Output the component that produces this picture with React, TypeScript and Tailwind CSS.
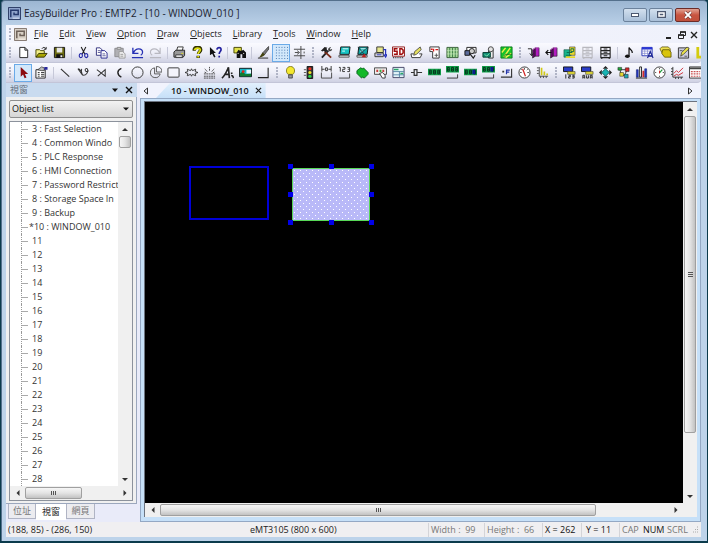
import type { ReactNode } from "react";
import clsx from "clsx";

type Tool = { name: string; art: ReactNode; active?: boolean };
type Item = Tool | "sep" | "grip";

const Monitor = ({ screen = "#19c4c4" }: { screen?: string }) => (
  <>
    <path d="M3 1h10l-1 8H2z" fill={screen} stroke="#111" />
    <path d="M5 3h6M4.500 5.500h3" stroke="#e8ffff" />
    <path d="M1 10h11v2H1z" fill="#ddd" stroke="#333" strokeWidth=".8" />
  </>
);

const Lcd = ({ y = 3 }: { y?: number }) => (
  <>
    <path d={`M0 ${y}h14v7H0z`} fill="#12a04a" />
    <path
      d={`M1.500 ${y + 1.5}h2v4h-2zM6 ${y + 1.5}h2v4h-2zM10.500 ${y + 1.5}h2v4h-2zM1.500 ${y + 3.5}h2M6 ${y + 3.5}h2M10.500 ${y + 3.5}h2`}
      stroke="#04301a"
      fill="none"
    />
  </>
);

const Shelf = () => <path d="M1 13h11.500V9" stroke="#333" fill="none" />;

const Book = () => (
  <>
    <path d="M6 4l3-2v9l-3 2z" fill="#5e0a66" stroke="#111" strokeWidth=".6" />
    <path d="M9 2h4v9H9z" fill="#b21cc0" stroke="#111" strokeWidth=".6" />
    <path d="M6 4l3-2h4" stroke="#e070e8" strokeWidth=".8" fill="none" />
  </>
);

const Cabinet = ({ color }: { color: string }) => (
  <path
    d="M2 1.500h10v11H2zM2 5h10M2 8.500h10M5 3.300h4M5 6.800h4M5 10.500h4M3 13v1M11 13v1"
    stroke={color}
    fill="none"
    strokeWidth="1.200"
  />
);

const fileTools: Item[] = [
  "grip",
  { name: "New", art: <path d="M3 1.500h5.500L11.500 4.500v8H3zM8.500 1.500v3h3" fill="#fff" stroke="#222" /> },
  {
    name: "Open",
    art: (
      <>
        <path d="M1 12V4h4l1 1h4v3" fill="#f4f08a" stroke="#444400" />
        <path d="M1 12l3-4h9l-3 4z" fill="#a8a400" stroke="#333300" />
        <path d="M7.500 3c1-2 3-2 4 0M12 1v2.500H9.500" stroke="#222" fill="none" />
      </>
    ),
  },
  {
    name: "Save",
    art: (
      <>
        <path d="M1.500 1.500h11v11h-11z" fill="#6b6b10" stroke="#111" />
        <path d="M4 2h6v5H4z" fill="#e6e6e6" />
        <path d="M3.500 9h7v4h-7z" fill="#111" />
        <path d="M8 10h2v2H8z" fill="#eee" />
      </>
    ),
  },
  "sep",
  {
    name: "Cut",
    art: (
      <>
        <path d="M4.500 1L8.500 9M9.500 1L5.500 9" stroke="#222" fill="none" strokeWidth="1.200" />
        <path d="M5.500 8.500C2 7 1.500 12 4 12.500 6 12.500 6 10 5.500 8.500zM8.500 8.500c3.500-1.500 4 3 2 4-2.500 0-2.500-2-2-4z" stroke="#2428a8" fill="none" strokeWidth="1.200" />
      </>
    ),
  },
  {
    name: "Copy",
    art: (
      <>
        <path d="M1.500 2h4L8 4.500V10H1.500z" fill="#fff" stroke="#30307c" />
        <path d="M6.500 5h4L13 7.500V13H6.500z" fill="#fff" stroke="#24248c" />
        <path d="M3 5h3M3 7h3M8 8.500h3M8 10.500h3.500" stroke="#30307c" strokeWidth=".8" />
      </>
    ),
  },
  {
    name: "Paste",
    art: (
      <>
        <path d="M2 2.500h9v9H2z" fill="#b0b0b4" stroke="#8c8c90" />
        <path d="M4.500 1.500h4v2h-4z" fill="#ddd" stroke="#888" />
        <path d="M6.500 6h4L13 8.500V13H6.500z" fill="#eee" stroke="#999" />
        <path d="M8 9h3M8 11h3" stroke="#999" />
      </>
    ),
  },
  {
    name: "Undo",
    art: <path d="M2 2v6h6M2.500 7.500C5 1.500 12 2 12.500 6.500c0 2-1 3-2 3.500M1 12.500h12" stroke="#2630b4" fill="none" strokeWidth="1.400" />,
  },
  {
    name: "Redo",
    art: <path d="M12 2v6H6M11.500 7.500C9 1.500 2 2 1.500 6.500c0 2 1 3 2 3.500M1 12.500h12" stroke="#b8b8c0" fill="none" strokeWidth="1.200" />,
  },
  "sep",
  {
    name: "Print",
    art: (
      <>
        <path d="M4 5l1-4h6l-1 4z" fill="#fff" stroke="#333" />
        <path d="M1 6.500l2-2h9.500V10L11 12H1z" fill="#999" stroke="#222" />
        <path d="M3 9.500h7v3H3z" fill="#ddd" stroke="#222" strokeWidth=".8" />
        <path d="M9 8h2" stroke="#e0d820" />
      </>
    ),
  },
  {
    name: "About",
    art: (
      <>
        <path d="M3.500 5V3.500C4.500.5 10.500.5 10.500 4c0 2-2.500 2.500-2.500 4.500M7.700 10.500v2.500" stroke="#333300" strokeWidth="3.600" fill="none" />
        <path d="M3.800 4.500C4.300 1.500 10 1.500 10 4c0 2-2.300 2.500-2.300 4.500M7.700 10.700v1.800" stroke="#dede10" strokeWidth="1.900" fill="none" />
      </>
    ),
  },
  {
    name: "Help pointer",
    art: (
      <>
        <path d="M1 1l6.500 6.500H5l2 4-1.500.8-2-4L1 10z" fill="#111" />
        <path d="M8.500 4C9 1 13 1 13 4c0 2-2 2-2 4.500M11 10.500v1.800" stroke="#2422a0" strokeWidth="1.800" fill="none" />
      </>
    ),
  },
  "sep",
  {
    name: "Find",
    art: (
      <>
        <path d="M1 1.500h8v6H1z" fill="#e0e04a" stroke="#444400" />
        <path d="M4 7l2-3 1.500 1h2L11 4l3 3v6h-4V9H8v4H4z" fill="#111" />
        <path d="M5 8h1M11 8h1" stroke="#fff" />
      </>
    ),
  },
  "sep",
  {
    name: "Style",
    art: (
      <>
        <path d="M12.500.5L6 7.500l2 2 4.500-6z" fill="#777" stroke="#222" strokeWidth=".7" />
        <path d="M6 7l2.500 2.500C6.500 12 4.500 12 2 12.500 4 11 4 9 6 7z" fill="#444410" />
        <path d="M1 13h11" stroke="#222" />
      </>
    ),
  },
  {
    name: "Grid",
    active: true,
    art: (
      <path
        d="M1 1.500h13M1 4.500h13M1 7.500h13M1 10.500h13M1 13.500h13"
        stroke="#3c6ca8"
        strokeDasharray="1 2"
      />
    ),
  },
  { name: "Snap", art: <path d="M1 3.500h12M1 10.500h12M8.500 0v14M2 7h4M4.500 5L7 7 4.500 9M12 6v2" stroke="#444" fill="none" /> },
  "grip",
  {
    name: "System parameters",
    art: (
      <>
        <path d="M2 12.500L9 5" stroke="#222" strokeWidth="2" />
        <path d="M5 6l7 6.500" stroke="#7c2c18" strokeWidth="2" />
        <path d="M1 5l4-4 3 1-1 1 1 2-2 2-2-2-1 1z" fill="#222" />
        <path d="M9 5c-1-2 1-4 3-3.500L10.500 3l1 1L13 3c.5 2-2 3.500-4 2z" fill="#444" />
      </>
    ),
  },
  { name: "Compile", art: <Monitor /> },
  {
    name: "Simulate",
    art: (
      <>
        <Monitor screen="#12a8a8" />
        <path d="M2 1l7 8M13 1L4 9" stroke="#1c2c34" strokeWidth=".8" />
        <path d="M9 8l2 4H6z" fill="#c02020" />
      </>
    ),
  },
  {
    name: "Download",
    art: (
      <>
        <path d="M3 1h7v6H3z" fill="#e6e68c" stroke="#333" />
        <path d="M1 7.500h9v4H1z" fill="#ddd" stroke="#333" />
        <path d="M10 4h2.500v6M10.500 9l2 3 1.500-3" stroke="#2632bc" fill="none" strokeWidth="1.300" />
        <path d="M3 9.500h5" stroke="#2632bc" />
      </>
    ),
  },
  {
    name: "Build SD data",
    art: (
      <>
        <path d="M.5 1h13v10H.5z" fill="#fff" stroke="#8c1414" />
        <path d="M6 3H2.500v2.700h3V9H2M8.500 3v6h2l1.500-1.500v-3L10.500 3z" stroke="#a00c0c" fill="none" strokeWidth="1.600" />
        <path d="M1 12.500h12" stroke="#333" strokeWidth="1.500" strokeDasharray="1 1" />
      </>
    ),
  },
  {
    name: "Edit label",
    art: (
      <>
        <path d="M1 8.500h3M10 8.500h3l-2 4H2l-1-4" fill="#fff" stroke="#333" />
        <path d="M4 10l1-4 6-5 1 3-5 5z" fill="#e6e060" stroke="#333" strokeWidth=".8" />
      </>
    ),
  },
  {
    name: "Address tag",
    art: (
      <>
        <path d="M2 1h10v12H5V6H2z" fill="#fff" stroke="#333" />
        <path d="M3 3.500h2M6 3v3M8 4h3" stroke="#d01c1c" strokeWidth="1.400" />
        <path d="M9 8v4M7 10h4" stroke="#555" />
      </>
    ),
  },
  {
    name: "String table",
    art: (
      <>
        <path d="M1 1.500h12v11H1z" fill="#a6d898" stroke="#335c33" />
        <path d="M4 2v10M7 2v10M10 2v10" stroke="#3a7c46" />
        <path d="M1 5h12M1 8.500h12" stroke="#d6efcf" strokeWidth=".6" />
      </>
    ),
  },
  {
    name: "Shape library",
    art: (
      <>
        <path d="M3 1.500h10v6H3z" fill="#fff" stroke="#222" />
        <path d="M1 5h5v5H1z" fill="#5c6c9c" stroke="#111" />
        <circle cx="8.500" cy="5.500" r="2.800" fill="#ccc" stroke="#222" />
        <path d="M6 8l4 5 2-3" stroke="#222" strokeWidth="1.300" fill="none" />
      </>
    ),
  },
  {
    name: "Picture library",
    art: (
      <>
        <path d="M7 3h5v10H7z" fill="#eee" stroke="#333" />
        <circle cx="9.500" cy="3.500" r="2.700" fill="#e4e4e4" stroke="#444" />
        <path d="M1 7h8v5H1z" fill="#128c74" stroke="#053d30" />
        <path d="M3 9l2 2 3-3" stroke="#7cecac" fill="none" />
      </>
    ),
  },
  {
    name: "Sound library",
    art: (
      <>
        <path d="M1 1h12v12H1z" fill="#18c42c" stroke="#0b7c1c" />
        <path d="M2 7l4-5M4 12l7-10M6 12.500L12 8" stroke="#f2f04a" strokeWidth="1.500" fill="none" />
        <path d="M4 12l2-3h7" stroke="#115c1c" fill="none" strokeWidth=".8" />
      </>
    ),
  },
  "grip",
  { name: "Import", art: (<><Book /><path d="M1 3h4v7M3 8l2 2.500L7 8" stroke="#222" fill="none" /></>) },
  { name: "Export", art: (<><Book /><path d="M7 7H1M3.500 4.500L1 7l2.500 2.500" stroke="#111" fill="none" strokeWidth="1.300" /></>) },
  {
    name: "Transfer",
    art: (
      <>
        <path d="M7 1h6v9H7z" fill="#e8d82c" stroke="#333" strokeWidth=".6" />
        <path d="M1 4h6v8H1z" fill="#18b48c" stroke="#0c4c3c" strokeWidth=".6" />
        <path d="M8.500 3h3v3h-3zM3 10h6M4 7h6" stroke="#086c50" fill="none" />
        <path d="M3 12h10" stroke="#e8d82c" strokeWidth="1.800" />
      </>
    ),
  },
  { name: "Archive", art: <Cabinet color="#b8b8be" /> },
  { name: "Data record", art: <Cabinet color="#222" /> },
  "sep",
  {
    name: "Sound",
    art: (
      <>
        <path d="M6.500 11V1.500C7 4 10.500 4 10 7.500" stroke="#111" fill="none" strokeWidth="1.300" />
        <ellipse cx="4.700" cy="11" rx="2.500" ry="1.900" fill="#111" />
      </>
    ),
  },
  {
    name: "Table",
    art: (
      <>
        <path d="M1 1.500h11v9H1z" fill="#fff" stroke="#2836b4" />
        <path d="M1 2.500h11" stroke="#2836d4" strokeWidth="2.500" />
        <path d="M1 5.500h11M1 8h11M4 3v7M7 3v7" stroke="#7c84cc" strokeWidth=".7" />
        <path d="M7 13l3-7 3 7M8 11h4" stroke="#1c2694" strokeWidth="1.300" fill="none" />
      </>
    ),
  },
  {
    name: "Tag",
    art: (
      <>
        <path d="M1 3l2-2h7l2 2v4H3z" fill="#eee050" stroke="#554c00" strokeWidth=".8" />
        <path d="M3 8l1-4h7l2 3v5H6z" fill="#d8c40c" stroke="#554c00" strokeWidth=".8" />
      </>
    ),
  },
  {
    name: "Edit",
    art: (
      <>
        <path d="M1.500 2h11v11h-11z" fill="#ccd" stroke="#333" />
        <path d="M4 11l1-4 6-6 2 2-6 6z" fill="#ece44c" stroke="#333" strokeWidth=".8" />
        <path d="M3 5h3M8 11h3" stroke="#555" />
      </>
    ),
  },
  { name: "Scale", art: <path d="M3 1v11h10" stroke="#d4cc10" fill="none" strokeWidth="3" /> },
];

const objectTools: Item[] = [
  "grip",
  {
    name: "Select",
    active: true,
    art: <path d="M4 1v10.500l2.500-2.300 1.700 4 2-.9-1.700-3.800H12z" fill="#8c0c10" />,
  },
  {
    name: "Properties",
    art: (
      <>
        <path d="M1 4h10v9H1z" fill="#fff" stroke="#222" />
        <path d="M3 7h2M6.500 7H10M3 9h2M6.500 9H10M3 11h2M6.500 11H10" stroke="#333" />
        <path d="M3 4l4-3 3 1v3L7 5z" fill="#bbb" stroke="#222" strokeWidth=".7" />
        <path d="M10 1h3.500v3H10z" fill="#28289c" />
      </>
    ),
  },
  "sep",
  { name: "Line", art: <path d="M2 3l9 8.500" stroke="#333" strokeWidth="1.200" /> },
  { name: "Freeform", art: <path d="M1 3c3 0 2 2 4 3M5 3c-1 4 1 7 2 7 3 0 5-3 4.500-6-.5-2.500-3.500-1-2.500 1 .5 1.500 2.500 1 3.500 0M1 3l5 7" stroke="#333" fill="none" strokeWidth="1.100" /> },
  { name: "Polyline", art: <path d="M2 4l9 7V4L3 11" stroke="#333" fill="none" strokeWidth="1.100" /> },
  { name: "Arc", art: <path d="M9 2.500C4 4.500 4 9.500 9 12" stroke="#222" fill="none" strokeWidth="1.500" /> },
  { name: "Ellipse", art: <circle cx="7" cy="7" r="6" fill="none" stroke="#333" /> },
  {
    name: "Pie",
    art: <path d="M6 2a5.300 5.300 0 1 0 6 6.500H6zM8 .500v6h6C14 3 12 .500 8 .500z" stroke="#555" fill="none" />,
  },
  { name: "Rectangle", art: <rect x="1" y="2" width="12" height="10" rx="1" fill="#f4f4fb" stroke="#333" /> },
  { name: "Polygon", art: <path d="M0 7l3-1-.5-2.500L6 5l1-2 1 2 3.500-1.500L11 6l3 1-3 1 .5 2.500L8 9l-1 2-1-2-3.500 1.500L3 8z" stroke="#333" fill="none" /> },
  {
    name: "Scale mark",
    art: <path d="M1 8.500h12M1 11h12M1 13h12M4.500 6L2 3M7 5V1M9.500 6L12 3M10.500 7.500l2-1M3.500 7.500l-2-1" stroke="#444" fill="none" strokeDasharray="2 .6" />,
  },
  {
    name: "Text",
    art: <path d="M1 13C4 11 6 6 8 1.500L9 13M3.500 9H9M11.500 7v1.500M11 10.500c2-.5 2 1.500 2.500 2.500" stroke="#222" fill="none" strokeWidth="1.800" />,
  },
  {
    name: "Picture",
    art: (
      <>
        <path d="M.5 2.500h13v9H.5z" fill="#18b8c8" stroke="#111" />
        <path d="M1 8l3-2 3 3 6-1v3H1z" fill="#107c30" />
        <circle cx="4.500" cy="6" r="1.500" fill="#e02818" />
        <path d="M8 4h5v4H8z" fill="#e8f8ff" />
      </>
    ),
  },
  { name: "Vector", art: <path d="M1 12.500h11V2" stroke="#222" fill="none" strokeWidth="1.200" /> },
  "grip",
  {
    name: "Bit lamp",
    art: (
      <>
        <path d="M4.500 9C1.500 7 2 .5 7 .5s5.500 6.500 2.500 8.500z" fill="#f4e830" stroke="#6c6400" strokeWidth=".8" />
        <path d="M5 9.500h4v3.500H5z" fill="#999" stroke="#333" strokeWidth=".8" />
      </>
    ),
  },
  {
    name: "Word lamp",
    art: (
      <>
        <path d="M5.500.5h6v13h-6z" fill="#333" stroke="#111" />
        <circle cx="8.500" cy="3" r="1.700" fill="#f03020" />
        <circle cx="8.500" cy="7" r="1.700" fill="#f0e028" />
        <circle cx="8.500" cy="11" r="1.700" fill="#28d848" />
        <path d="M2 4h2.500M2 7h2.500M2 10h2.500" stroke="#555" />
      </>
    ),
  },
  { name: "Set bit", art: (<><path d="M2 0v6M2 3.500h3M12 0v6M9 3.500h3M6 2h2v3H6z" stroke="#333" fill="none" /><path d="M1.500 7v6M1.500 13h11V7" stroke="#444" fill="none" /></>) },
  { name: "Set word", art: (<><path d="M1 1.500h1.500V6M5 1.500h2.500v2H5V6h2.500M10 1.500h2.500V6H10M10.500 3.500h2" stroke="#333" fill="none" /><path d="M1 13h11.500V8" stroke="#444" fill="none" /></>) },
  { name: "Function key", art: <path d="M1 5l4-3 2 1 1-1 5 5v2l-4 4-2-1-1 1-5-5z" fill="#12b828" stroke="#08601c" /> },
  {
    name: "Toggle switch",
    art: (
      <>
        <path d="M.5 2h13v7H.5z" fill="#eee" stroke="#444" />
        <path d="M2.500 4h2v2.500h-2zM9 4h2v2.500H9z" fill="#c83838" />
        <path d="M6 4h2v2.500H6z" fill="#38a838" />
        <path d="M6 8l3-1 3 3v3H9z" fill="#fff" stroke="#333" />
      </>
    ),
  },
  {
    name: "Multi-state switch",
    art: (
      <>
        <path d="M1 1.500h12v11H1z" fill="#e4f4f8" stroke="#446" />
        <path d="M1 6h12M1 9.500h12M8 6v6" stroke="#5888a8" fill="none" />
        <path d="M2 3.700h5M9 8h3" stroke="#28a868" strokeWidth="1.500" />
      </>
    ),
  },
  { name: "Slider", art: <path d="M1 7h3.500M8 7h5M4.500 4h3v6h-3z" stroke="#333" fill="none" strokeWidth="1.300" /> },
  { name: "Numeric input", art: <Lcd /> },
  { name: "Numeric display", art: (<><Lcd y={0} /><Shelf /></>) },
  { name: "ASCII input", art: (<><Lcd /><path d="M9 4h3v5H9z" fill="#0c1c90" /></>) },
  { name: "ASCII display", art: (<><Lcd y={0} /><path d="M9 1h3v5H9z" fill="#0c1c90" /><Shelf /></>) },
  {
    name: "Indirect window",
    art: (
      <>
        <path d="M1 12h11.500V3" stroke="#333" fill="none" strokeWidth="1.200" />
        <path d="M7 9V4.500h3.500M7 6.500h3" stroke="#2434a8" fill="none" strokeWidth="1.300" />
        <path d="M2.500 5h2v2h-2z" fill="#333" />
      </>
    ),
  },
  {
    name: "Meter",
    art: (
      <>
        <circle cx="7" cy="7" r="6" fill="#fff" stroke="#333" />
        <path d="M7 2v2M2 7h2M10 7h2M3.500 3.500l1 1M10.500 3.500l-1 1" stroke="#555" />
        <path d="M5 3l3 8" stroke="#d02020" strokeWidth="1.300" />
      </>
    ),
  },
  {
    name: "Bar graph",
    art: (
      <>
        <path d="M3.500 1v10H13M1 2h2M1 5h2M1 8h2M5 11v2M8 11v2M11 11v2" stroke="#444" fill="none" />
        <path d="M6 2v8M9 6v4M12 8v2" stroke="#d0c814" strokeWidth="1.800" />
      </>
    ),
  },
  "grip",
  {
    name: "PLC control",
    art: (
      <>
        <path d="M.5 1h10v5H.5z" fill="#2a3cc8" stroke="#111" />
        <path d="M5 6h8v3H5z" fill="#e0d838" stroke="#333" strokeWidth=".6" />
        <path d="M3 9v4.500M6 10h2v1.500H6V13h2M10 10h2v3h-2M10 11.500h2" stroke="#222" fill="none" />
      </>
    ),
  },
  {
    name: "ASCII transfer",
    art: (
      <>
        <path d="M.5 1h10v5H.5z" fill="#2a3cc8" stroke="#111" />
        <path d="M5 6h8v3H5z" fill="#e0d838" stroke="#333" strokeWidth=".6" />
        <path d="M2 13.500V10h2v3.500M6 10v3h2v-3M10 13.500V10h2v3.500M2 12h2M10 12h2" stroke="#222" fill="none" />
      </>
    ),
  },
  {
    name: "Moving shape",
    art: (
      <>
        <path d="M7 0l3 3H4zM7 14l-3-3h6zM0 7l3-3v6zM14 7l-3 3V4z" fill="#222" />
        <path d="M7 3l4 4-4 4-4-4z" fill="#18b4b4" stroke="#085c5c" />
      </>
    ),
  },
  {
    name: "Animation",
    art: (
      <>
        <path d="M3 4h8l-3 6H5z" fill="none" stroke="#333" />
        <path d="M1 1.500h4v3H1z" fill="#22a43c" stroke="#111" strokeWidth=".5" />
        <path d="M9 2h4v4H9z" fill="#d42828" stroke="#111" strokeWidth=".5" />
        <path d="M3 7h4v4H3z" fill="#e8d830" stroke="#111" strokeWidth=".5" />
        <path d="M8 9h4v4H8z" fill="#22a4b4" stroke="#111" strokeWidth=".5" />
      </>
    ),
  },
  {
    name: "History chart",
    art: (
      <>
        <path d="M1.500 4h2v8h-2z" fill="#2638c4" stroke="#14206c" strokeWidth=".6" />
        <path d="M5 1h2v11H5z" fill="#fff" stroke="#222" />
        <path d="M8 5h2v7H8z" fill="#d02c2c" />
        <path d="M10.500 3h2v9h-2z" fill="#2638c4" stroke="#14206c" strokeWidth=".6" />
        <path d="M1 13h12" stroke="#222" />
      </>
    ),
  },
  {
    name: "Clock",
    art: (
      <>
        <circle cx="7" cy="7" r="6" fill="#fff" stroke="#333" />
        <path d="M7 2v1.500M7 10.500V12M2 7h1.500M10.500 7H12" stroke="#555" />
        <path d="M7 7.500L10 4" stroke="#209838" strokeWidth="1.300" />
        <path d="M7 8V5" stroke="#c82020" />
      </>
    ),
  },
  {
    name: "Trend display",
    art: (
      <>
        <path d="M2 1v11h11M0 3h2M0 6h2M0 9h2M5 12v2M8 12v2M11 12v2" stroke="#333" fill="none" />
        <path d="M3 8l3-3 2 2 5-5M3 11l3-2 2 1 5-3" stroke="#cc2c34" fill="none" />
      </>
    ),
  },
  {
    name: "Data table",
    art: (
      <>
        <path d="M.5 1h13v12H.5z" fill="#fff" stroke="#333" />
        <path d="M1 2.500h12" stroke="#444" strokeWidth="2" />
        <path d="M2 6h10M2 8.500h10M2 11h10" stroke="#c85050" strokeDasharray="2 1" strokeWidth="1.200" />
      </>
    ),
  },
];

const menus = ["File", "Edit", "View", "Option", "Draw", "Objects", "Library", "Tools", "Window", "Help"];

const windows = [
  "3 : Fast Selection",
  "4 : Common Windo",
  "5 : PLC Response",
  "6 : HMI Connection",
  "7 : Password Restrict",
  "8 : Storage Space In",
  "9 : Backup",
  "*10 : WINDOW_010",
  ...Array.from({ length: 18 }, (_, i) => String(i + 11)),
];

const handles = [
  "left-0 top-0",
  "left-[41px] top-0",
  "right-0 top-0",
  "left-0 top-[28px]",
  "right-0 top-[28px]",
  "left-0 bottom-0",
  "left-[41px] bottom-0",
  "right-0 bottom-0",
];

function Grip() {
  return (
    <span className="flex h-3 w-[9px] shrink-0 flex-col items-center justify-between first:w-2">
      {[0, 1, 2, 3].map((n) => (
        <span key={n} className="size-[2px] bg-[#b0b4c6]" />
      ))}
    </span>
  );
}

function Toolbar({ label, items }: { label: string; items: Item[] }) {
  return (
    <div
      role="toolbar"
      aria-label={label}
      className="flex h-5 items-center overflow-hidden rounded-r-sm border-b border-[#c3c5d8] bg-linear-to-b from-[#fafaff] via-[#eeeff8] to-[#cfd1e3]"
    >
      {items.map((item, i) => {
        if (item === "grip") return <Grip key={i} />;
        if (item === "sep") {
          return (
            <span key={i} className="flex w-[6px] shrink-0 justify-center">
              <span className="h-3 w-px bg-[#c6c8d8]" />
            </span>
          );
        }
        return (
          <button
            key={i}
            aria-label={item.name}
            className={clsx(
              "flex h-[18px] w-[18px] shrink-0 items-center justify-center",
              item.active && "border border-[#6aaae8] bg-[#d3e8fb]",
            )}
          >
            <svg viewBox="0 0 14 14" className="size-[13px] shrink-0">
              {item.art}
            </svg>
          </button>
        );
      })}
    </div>
  );
}

function Logo({ dark }: { dark?: boolean }) {
  return (
    <svg viewBox="0 0 14 14" className="size-[13px] shrink-0">
      <path d="M.5.500h13v13H.5z" fill={dark ? "#8fa4cc" : "#d8d0c6"} stroke={dark ? "#24345c" : "#7c7068"} />
      <path d="M3 11V3.500h8V8H6.500V6" stroke={dark ? "#24386c" : "#6c6058"} fill="none" strokeWidth="1.600" />
      <path d="M5 12h7" stroke={dark ? "#e0e8f8" : "#fff8f0"} />
    </svg>
  );
}

function Arrow({ dir }: { dir: "up" | "down" | "left" | "right" }) {
  const shape = {
    up: "M0 5h6L3 2z",
    down: "M0 2h6L3 5z",
    left: "M4.500 0v6L1.500 3z",
    right: "M1.500 0v6L4.500 3z",
  }[dir];
  return (
    <svg viewBox="0 0 6 6" className="size-[6px]">
      <path d={shape} fill="#333" />
    </svg>
  );
}

function HScroll({ thumb }: { thumb: string }) {
  return (
    <div className="flex h-[14px] shrink-0 bg-[#f0f0f0]">
      <button aria-label="Scroll left" className="flex w-[15px] items-center justify-center">
        <Arrow dir="left" />
      </button>
      <div className="flex flex-1 py-px">
        <div className={clsx("flex items-center justify-center gap-px rounded-xs border border-[#a0a0a0] bg-linear-to-b from-[#f6f6f6] via-[#e4e4e4] to-[#c2c2c2]", thumb)}>
          <span className="h-1 w-px bg-[#555]" />
          <span className="h-1 w-px bg-[#555]" />
          <span className="h-1 w-px bg-[#555]" />
        </div>
      </div>
      <button aria-label="Scroll right" className="flex w-[15px] items-center justify-center">
        <Arrow dir="right" />
      </button>
    </div>
  );
}

function VScroll({ thumb, marks }: { thumb: string; marks?: boolean }) {
  return (
    <div className="flex w-[14px] shrink-0 flex-col bg-[#f0f0f0]">
      <button aria-label="Scroll up" className="flex h-[14px] items-center justify-center">
        <Arrow dir="up" />
      </button>
      <div className="flex-1 px-px">
        <div className={clsx("flex flex-col items-center justify-center gap-px rounded-xs border border-[#a0a0a0] bg-linear-to-r from-[#f6f6f6] via-[#e4e4e4] to-[#c2c2c2]", thumb)}>
          {marks && (
            <>
              <span className="h-px w-[5px] bg-[#555]" />
              <span className="h-px w-[5px] bg-[#555]" />
              <span className="h-px w-[5px] bg-[#555]" />
            </>
          )}
        </div>
      </div>
      <button aria-label="Scroll down" className="flex h-[14px] items-center justify-center">
        <Arrow dir="down" />
      </button>
    </div>
  );
}

function TitleBar() {
  return (
    <header className="flex h-6 shrink-0 items-center pl-[2px] text-[10px] text-[#1c2430]">
      <Logo dark />
      <h1 className="ml-[3px] flex-1 whitespace-pre">EasyBuilder Pro : EMTP2 - [10 - WINDOW_010 ]</h1>
      <div className="flex gap-[2px] pt-[3px] pr-px">
        <button aria-label="Minimize" className="flex h-[14px] w-6 items-center justify-center rounded-xs border border-[#6c829c] bg-linear-to-b from-[#d3e0ee] to-[#a9bfd8]">
          <span className="h-[4px] w-2 border border-[#4c5870] bg-white" />
        </button>
        <button aria-label="Maximize" className="flex h-[14px] w-6 items-center justify-center rounded-xs border border-[#6c829c] bg-linear-to-b from-[#d3e0ee] to-[#a9bfd8]">
          <svg viewBox="0 0 9 7" className="h-[7px] w-[9px]">
            <path d="M0 0h9v7H0z" fill="#4c5870" />
            <path d="M2 2h5v3H2z" fill="#4c5870" stroke="#fff" strokeWidth="1.500" />
          </svg>
        </button>
        <button aria-label="Close" className="flex h-[14px] w-[25px] items-center justify-center rounded-xs border border-[#6c2c28] bg-linear-to-b from-[#e0a294] via-[#c85440] to-[#c0503c]">
          <svg viewBox="0 0 8 8" className="size-2">
            <path d="M1 1l6 6M7 1L1 7" stroke="#5c2c2c" strokeWidth="3" />
            <path d="M1 1l6 6M7 1L1 7" stroke="#fff" strokeWidth="1.800" />
          </svg>
        </button>
      </div>
    </header>
  );
}

function MenuBar() {
  return (
    <nav className="flex h-[18px] shrink-0 items-center bg-linear-to-r from-[#f5f6fd] to-[#eff1fb] text-[9px]">
      <Grip />
      <span className="mr-[7px]">
        <Logo />
      </span>
      {menus.map((menu) => (
        <button key={menu} className="mr-[11px]">
          <span className="underline">{menu[0]}</span>
          {menu.slice(1)}
        </button>
      ))}
      <div className="ml-auto flex items-center gap-1 pt-[2px] pr-[3px]">
        <button aria-label="Minimize window" className="flex h-2 w-2 items-end">
          <span className="h-[2px] w-[5px] bg-[#222]" />
        </button>
        <button aria-label="Restore window">
          <svg viewBox="0 0 8 8" className="size-2">
            <path d="M2.500 3V1h5v3.500H6M.5 4h5v3.500h-5z" stroke="#222" fill="none" />
            <path d="M2 1h6M0 4h6" stroke="#222" strokeWidth="1.500" />
          </svg>
        </button>
        <button aria-label="Close window">
          <svg viewBox="0 0 8 8" className="size-2">
            <path d="M1 1l6 6M7 1L1 7" stroke="#222" strokeWidth="1.400" />
          </svg>
        </button>
      </div>
    </nav>
  );
}

function WindowPanel() {
  return (
    <aside className="flex w-[131px] shrink-0 flex-col">
      <div className="flex h-[14px] shrink-0 items-center bg-[#c9dbef] pr-1 pl-1 text-[9px] text-[#66707c]">
        <h2 className="flex-1">視窗</h2>
        <button aria-label="Panel menu" className="mr-[6px]">
          <svg viewBox="0 0 8 8" className="size-2">
            <path d="M1 2.500h6L4 6z" fill="#111" />
          </svg>
        </button>
        <button aria-label="Close panel">
          <svg viewBox="0 0 8 8" className="size-2">
            <path d="M1 1l6 6M7 1L1 7" stroke="#111" strokeWidth="1.400" />
          </svg>
        </button>
      </div>
      <div className="flex min-h-0 flex-1 flex-col gap-[3px] border-r border-b border-[#9ba7bd] bg-[#f0f0f0] px-[3px] pt-[3px] pb-[2px]">
        <div className="relative shrink-0">
          <select
            aria-label="Panel view"
            className="block h-[18px] w-full appearance-none rounded-xs border border-[#8e8e8e] bg-linear-to-b from-[#f2f2f2] to-[#d6d6d6] px-[2px] text-[9px] leading-4 text-[#111]"
          >
            <option>Object list</option>
          </select>
          <svg viewBox="0 0 6 6" className="pointer-events-none absolute top-[6px] right-1 size-[6px]">
            <path d="M0 1.500h6L3 4.500z" fill="#111" />
          </svg>
        </div>
        <div className="flex min-h-0 flex-1 flex-col border border-[#8c929c] bg-white">
          <div className="flex min-h-0 flex-1">
            <ul className="min-w-0 flex-1 overflow-hidden pl-[11px] text-[9px] leading-[14px] text-[#333]">
              {windows.map((name) => (
                <li key={name} className="flex h-[14px] items-center border-l border-dotted border-[#999] whitespace-pre">
                  <span className={clsx("h-px w-[6px] shrink-0 bg-[#aaa]", name[0] === "*" ? "mr-px" : "mr-1")} />
                  {name}
                </li>
              ))}
            </ul>
            <VScroll thumb="h-3" />
          </div>
          <HScroll thumb="w-[57px]" />
        </div>
      </div>
      <div role="tablist" className="flex h-[18px] shrink-0 pl-[2px] text-[9px] text-[#777]">
        <button role="tab" className="h-[15px] w-[28px] border border-t-0 border-[#b0b4c4] bg-[#ececf0]">位址</button>
        <button role="tab" aria-selected className="h-4 w-[30px] bg-white text-[#222]">視窗</button>
        <button role="tab" className="h-[15px] w-[29px] border border-t-0 border-[#b0b4c4] bg-[#ececf0]">網頁</button>
      </div>
    </aside>
  );
}

function Canvas() {
  return (
    <div className="relative min-w-0 flex-1 overflow-hidden bg-black">
      <div className="absolute top-16 left-11 h-[54px] w-20 border-2 border-[#0000d8]" />
      <div className="absolute top-[62px] left-[143px] h-[61px] w-[86px] p-1">
        <div className="h-full w-full border border-[#58d858] bg-[#b9b9f8]">
          <svg className="block h-full w-full">
            <pattern id="dots" width="6" height="6" patternUnits="userSpaceOnUse">
              <path d="M1 1h1v1H1zM4 4h1v1H4z" fill="#fff" />
            </pattern>
            <rect width="100%" height="100%" fill="url(#dots)" />
          </svg>
        </div>
        {handles.map((place) => (
          <span key={place} className={clsx("absolute size-[5px] bg-[#0000e8]", place)} />
        ))}
      </div>
    </div>
  );
}

function Editor() {
  return (
    <main className="ml-[3px] flex min-w-0 flex-1 flex-col">
      <div role="tablist" className="flex h-[15px] shrink-0 items-center bg-[#f1f3fd]">
        <button aria-label="Previous tab" className="ml-[2px]">
          <svg viewBox="0 0 8 8" className="size-2">
            <path d="M5.500 1v6L2 4z" fill="none" stroke="#333" />
          </svg>
        </button>
        <div className="ml-[6px] flex h-[15px] items-center bg-linear-to-b from-[#e2f0fd] to-[#c6e0f8] pr-1 pl-[15px] [clip-path:polygon(14px_0,100%_0,100%_100%,0_100%)]">
          <button role="tab" aria-selected className="text-[9px] font-semibold text-[#111]">10 - WINDOW_010</button>
          <button aria-label="Close tab" className="ml-[6px]">
            <svg viewBox="0 0 8 8" className="size-[7px]">
              <path d="M1 1l6 6M7 1L1 7" stroke="#222" strokeWidth="1.400" />
            </svg>
          </button>
        </div>
        <button aria-label="Next tab" className="mr-[7px] ml-auto">
          <svg viewBox="0 0 8 8" className="size-2">
            <path d="M2.500 1v6L6 4z" fill="none" stroke="#333" />
          </svg>
        </button>
      </div>
      <div className="flex min-h-0 flex-1 flex-col border border-[#94a8c4] bg-[#c6e0f8] px-[3px] pt-[2px] pb-1">
        <div className="flex min-h-0 flex-1 flex-col border-t border-l border-[#6c7480]">
          <div className="flex min-h-0 flex-1">
            <Canvas />
            <VScroll thumb="h-[317px]" marks />
          </div>
          <div className="flex">
            <div className="flex-1">
              <HScroll thumb="w-[436px]" />
            </div>
            <span className="w-[14px] bg-[#f0f0f0]" />
          </div>
        </div>
      </div>
    </main>
  );
}

function StatusBar() {
  return (
    <footer className="flex h-[15px] shrink-0 items-center bg-[#f0eff1] pt-px pl-[2px] text-[9px] whitespace-pre text-[#777]">
      <span className="w-[242px] text-[#222]">(188, 85) - (286, 150)</span>
      <span className="flex-1 text-[#222]">eMT3105 (800 x 600)</span>
      <span className="w-14 border-l border-[#d4d4d8] pl-[2px]">Width :  99</span>
      <span className="w-[58px] border-l border-[#d4d4d8] pl-[2px]">Height :  66</span>
      <span className="w-[39px] border-l border-[#d4d4d8] pl-[2px] text-[#111]">X = 262</span>
      <span className="w-[38px] border-l border-[#d4d4d8] pl-1 text-[#111]">Y = 11</span>
      <span className="w-[22px] border-l border-[#d4d4d8] pl-[2px]">CAP</span>
      <span className="w-6 pl-[2px] text-[#111]">NUM</span>
      <span className="w-[26px] pl-[2px]">SCRL</span>
      <svg viewBox="0 0 8 8" className="mr-[2px] size-2">
        <path d="M6 1h1M4 3.500h1M6 3.500h1M2 6h1M4 6h1M6 6h1" stroke="#aaa" />
      </svg>
    </footer>
  );
}

export default function App() {
  return (
    <div className="flex h-screen w-full flex-col bg-[#0b3b4c] px-px pb-[2px] font-['Open_Sans','Noto_Sans_CJK_TC',sans-serif] text-[#222]">
      <div className="flex min-h-0 flex-1 flex-col rounded-t border-t border-l border-[#54708c] bg-[#b9d1ea] bg-linear-to-b from-[#9cb6d2] to-[#bdd3ea] to-5% pr-[6px] pb-1 pl-1">
        <TitleBar />
        <MenuBar />
        <div className="flex shrink-0 flex-col bg-[#f1f3fc]">
          <Toolbar label="Standard" items={fileTools} />
          <Toolbar label="Objects" items={objectTools} />
        </div>
        <div className="flex min-h-0 flex-1 bg-[#e9ebf9]">
          <WindowPanel />
          <Editor />
        </div>
        <StatusBar />
      </div>
    </div>
  );
}
